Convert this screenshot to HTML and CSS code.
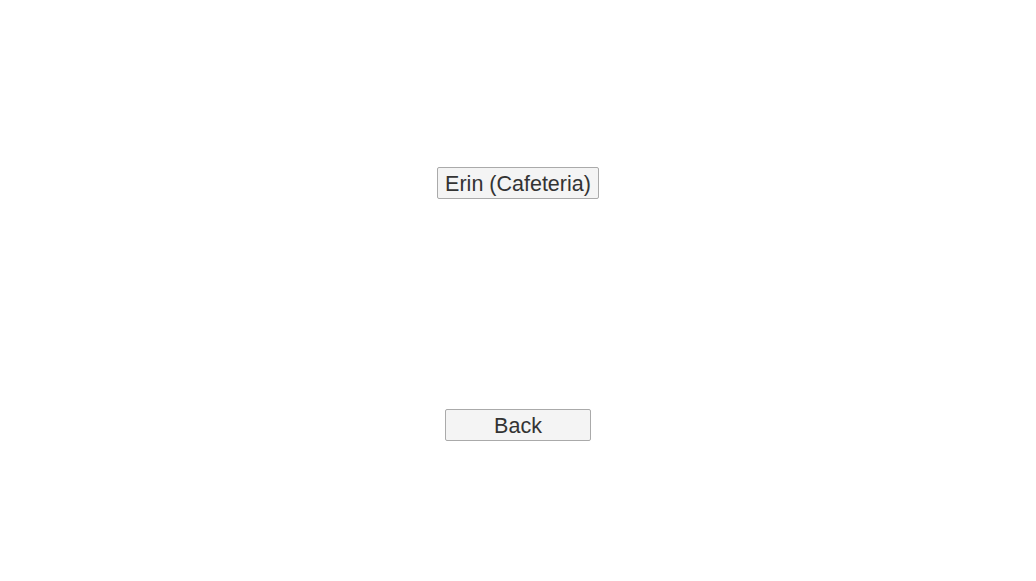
FILE: index.html
```html
<!DOCTYPE html>
<html lang="en">
<head>
  <meta charset="UTF-8" />
  <title>Choose</title>
  <link rel="stylesheet" href="styles.css">
</head>
<body>
  <div class="screen">
    <div class="choices">
      <button class="btn">Erin (Cafeteria)</button>
    </div>
    <div class="footer">
      <button class="btn back">Back</button>
    </div>
  </div>
</body>
</html>
```

FILE: styles.css
```css
body {
  margin: 0;
  background: #fff;
  font-family: 'Liberation Sans', Arial, sans-serif;
}

.screen {
  display: flex;
  flex-direction: column;
  align-items: center;
  padding-top: 167px;
}

.choices {
  display: flex;
  flex-direction: column;
  align-items: center;
}

.footer {
  margin-top: 210px;
}

.btn {
  font-family: 'Liberation Sans', Arial, sans-serif;
  font-size: 21.5px;
  color: #333;
  background: #f4f4f4;
  border: 1px solid #aaa;
  border-radius: 2px;
  height: 32px;
  padding: 2px 7px 0;
  cursor: pointer;
}

.back {
  width: 146px;
}
```
